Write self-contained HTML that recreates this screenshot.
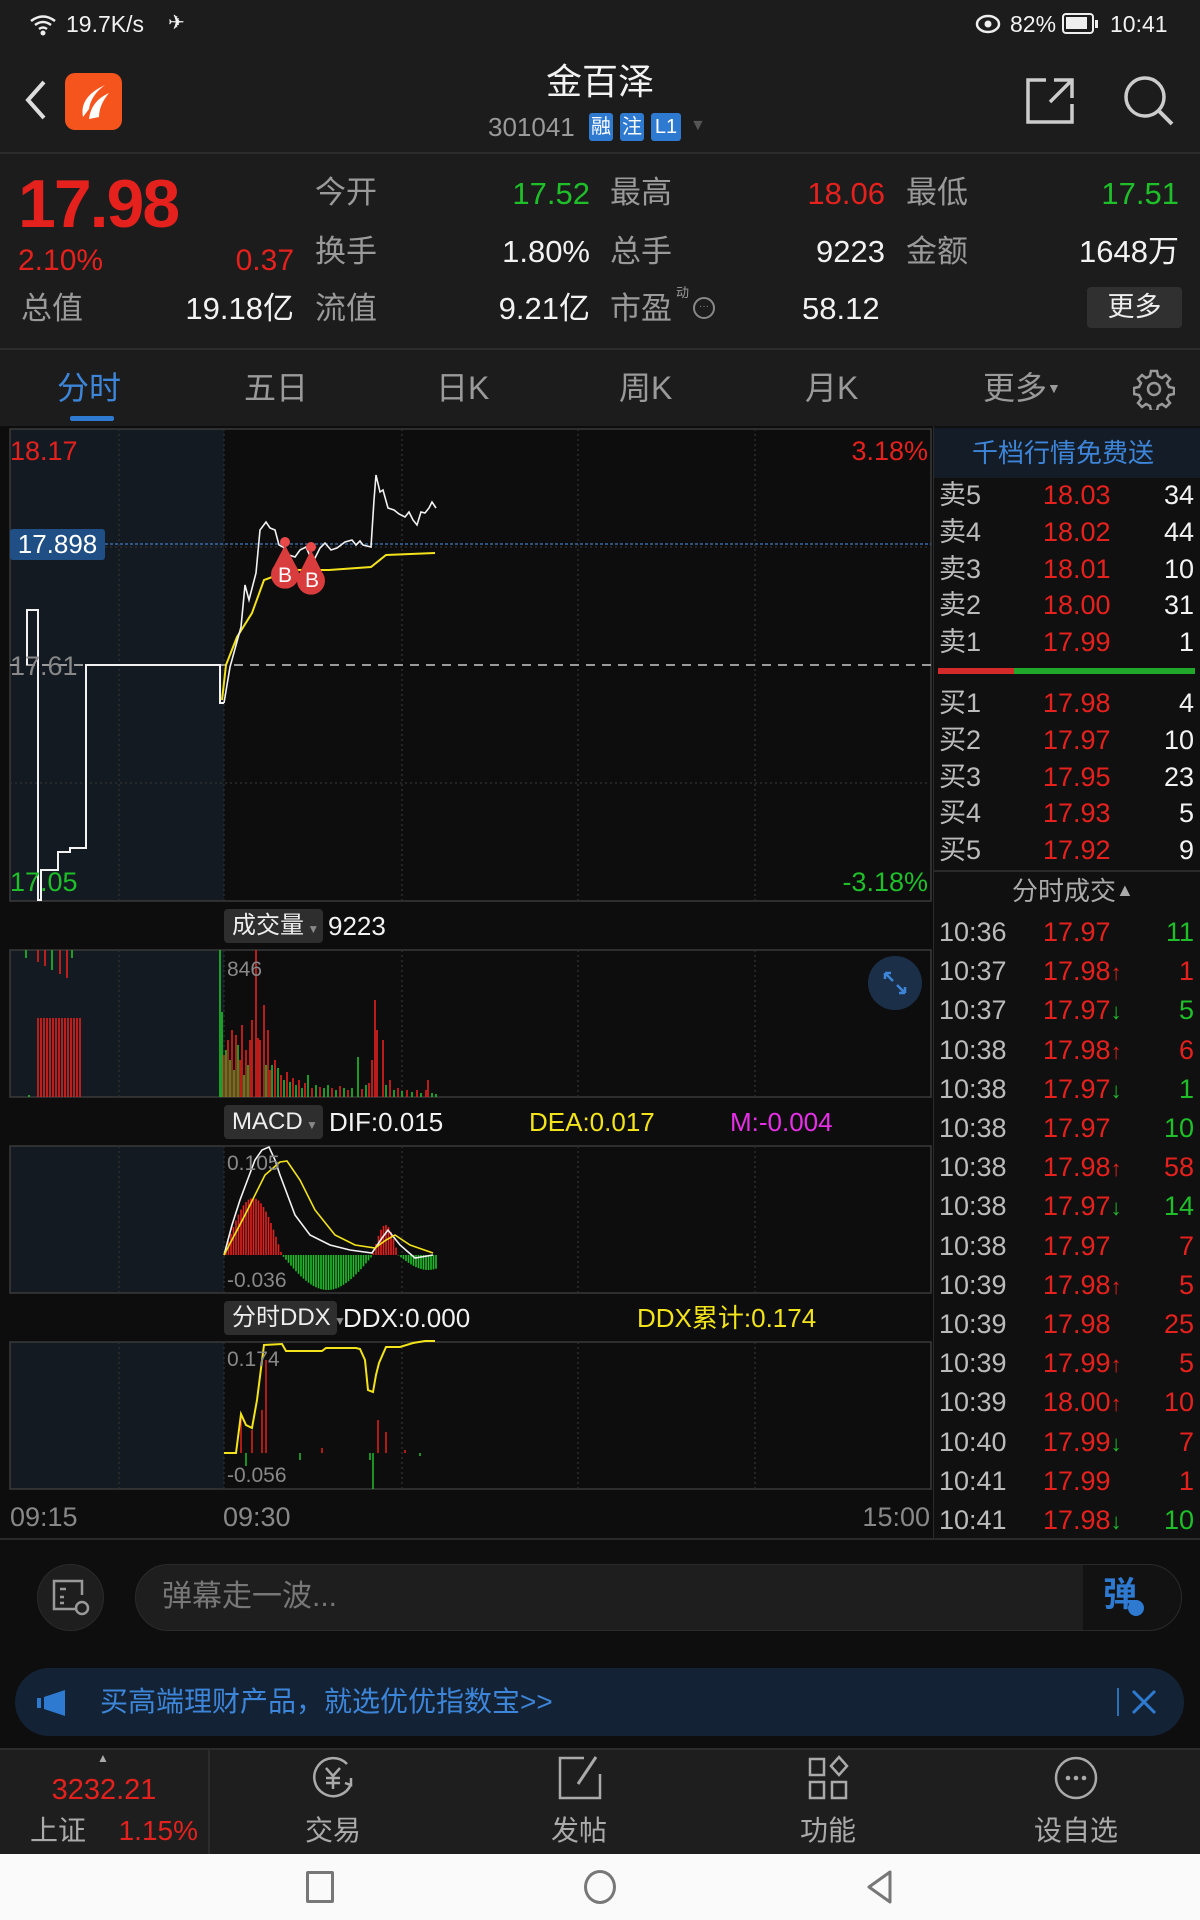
<!DOCTYPE html>
<html><head><meta charset="utf-8"><style>
*{margin:0;padding:0;box-sizing:border-box}
body{width:1200px;height:1920px;background:#0e0e0e;position:relative;overflow:hidden;font-family:"Liberation Sans","Noto Sans CJK SC",sans-serif;color:#ddd}
.a{position:absolute;white-space:nowrap;line-height:1}
.r{text-align:right}
.g{color:#9a9a9a}.red{color:#e5211d}.grn{color:#1fbf2a}.wh{color:#f2f2f2}.yel{color:#f2e31b}
</style></head><body>
<!-- top header bg -->
<div class="a" style="left:0;top:0;width:1200px;height:349px;background:#1c1c1c"></div>
<div class="a" style="left:0;top:152px;width:1200px;height:2px;background:#2c2c2c"></div>
<div class="a" style="left:0;top:348px;width:1200px;height:426px;height:78px;background:#1c1c1c;border-top:2px solid #2c2c2c"></div>
<!-- status bar -->
<svg class="a" style="left:28px;top:12px" width="30" height="26" viewBox="0 0 30 26"><path d="M3 9 Q15 0 27 9 M7 13 Q15 7 23 13 M11 17 Q15 14 19 17" stroke="#eee" stroke-width="2.5" fill="none"/><circle cx="15" cy="21" r="2.5" fill="#eee"/></svg>
<div class="a wh" style="left:66px;top:13px;font-size:23px">19.7K/s</div>
<div class="a wh" style="left:168px;top:13px;font-size:20px">✈</div>
<svg class="a" style="left:975px;top:12px" width="26" height="24"><ellipse cx="13" cy="12" rx="11" ry="8" stroke="#eee" stroke-width="2.5" fill="none"/><circle cx="13" cy="12" r="3.5" fill="#eee"/></svg>
<div class="a wh" style="left:1010px;top:13px;font-size:23px">82%</div>
<div class="a" style="left:1062px;top:13px;width:32px;height:21px;border:2.5px solid #eee;border-radius:4px"><div style="margin:2px;width:21px;height:12px;background:#eee"></div></div>
<div class="a" style="left:1095px;top:20px;width:3px;height:8px;background:#eee"></div>
<div class="a wh" style="left:1110px;top:13px;font-size:23px">10:41</div>
<!-- nav header -->
<svg class="a" style="left:22px;top:78px" width="28" height="44"><path d="M22 4 L6 22 L22 40" stroke="#ddd" stroke-width="4" fill="none"/></svg>
<div class="a" style="left:65px;top:73px;width:57px;height:57px;background:#f5541d;border-radius:10px"></div>
<svg class="a" style="left:65px;top:73px" width="57" height="57"><path d="M18 44 Q14 24 40 12 Q26 22 24 36 Z M24 46 Q26 28 44 20 Q34 32 34 44 Z" fill="#fff"/></svg>
<div class="a wh" style="left:0;width:1200px;top:64px;font-size:36px;text-align:center">金百泽</div>
<div class="a" style="left:488px;top:114px;font-size:26px;color:#9a9a9a">301041</div>
<div class="a" style="left:589px;top:113px;width:24px;height:28px;background:#2f7ad1;border-radius:3px;color:#fff;font-size:20px;text-align:center;line-height:28px">融</div>
<div class="a" style="left:620px;top:113px;width:24px;height:28px;background:#2f7ad1;border-radius:3px;color:#fff;font-size:20px;text-align:center;line-height:28px">注</div>
<div class="a" style="left:651px;top:113px;width:30px;height:28px;background:#2f7ad1;border-radius:3px;color:#fff;font-size:20px;text-align:center;line-height:28px">L1</div>
<div class="a" style="left:690px;top:118px;font-size:16px;color:#555">▼</div>
<svg class="a" style="left:1024px;top:76px" width="52" height="50"><path d="M22 4 H4 V46 H48 V28 M30 4 H48 V22 M48 4 L26 26" stroke="#ccc" stroke-width="3.5" fill="none"/></svg>
<svg class="a" style="left:1122px;top:74px" width="54" height="54"><circle cx="23" cy="23" r="19" stroke="#ccc" stroke-width="3.5" fill="none"/><path d="M37 37 L50 50" stroke="#ccc" stroke-width="4"/></svg>
<!-- quote -->
<div class="a red" style="left:18px;top:170px;font-size:68px;letter-spacing:-2px;font-weight:bold">17.98</div>
<div class="a red" style="left:18px;top:246px;font-size:30px">2.10%</div>
<div class="a red r" style="left:200px;width:94px;top:246px;font-size:30px">0.37</div>
<div class="a g" style="left:21px;top:293px;font-size:31px">总值</div>
<div class="a wh r" style="left:150px;width:144px;top:293px;font-size:31px">19.18亿</div>
<div class="a g" style="left:315px;top:177px;font-size:31px">今开</div>
<div class="a grn r" style="left:450px;width:140px;top:178px;font-size:31px">17.52</div>
<div class="a g" style="left:610px;top:177px;font-size:31px">最高</div>
<div class="a red r" style="left:745px;width:140px;top:178px;font-size:31px">18.06</div>
<div class="a g" style="left:906px;top:177px;font-size:31px">最低</div>
<div class="a grn r" style="left:1040px;width:139px;top:178px;font-size:31px">17.51</div>
<div class="a g" style="left:315px;top:236px;font-size:31px">换手</div>
<div class="a wh r" style="left:450px;width:140px;top:236px;font-size:31px">1.80%</div>
<div class="a g" style="left:610px;top:236px;font-size:31px">总手</div>
<div class="a wh r" style="left:745px;width:140px;top:236px;font-size:31px">9223</div>
<div class="a g" style="left:906px;top:236px;font-size:31px">金额</div>
<div class="a wh r" style="left:1030px;width:149px;top:236px;font-size:31px">1648万</div>
<div class="a g" style="left:315px;top:293px;font-size:31px">流值</div>
<div class="a wh r" style="left:450px;width:140px;top:293px;font-size:31px">9.21亿</div>
<div class="a g" style="left:610px;top:293px;font-size:31px">市盈</div>
<div class="a g" style="left:676px;top:286px;font-size:13px">动</div>
<div class="a" style="left:693px;top:297px;width:22px;height:22px;border:2px solid #888;border-radius:50%;font-size:10px;color:#888;text-align:center;line-height:16px">···</div>
<div class="a wh" style="left:802px;top:293px;font-size:31px">58.12</div>
<div class="a" style="left:1087px;top:287px;width:95px;height:41px;background:#303030;border-radius:4px;color:#eee;font-size:27px;text-align:center;line-height:41px">更多</div>
<!-- tabs -->
<div class="a" style="left:57px;top:372px;font-size:32px;color:#3d85d8">分时</div>
<div class="a" style="left:70px;top:416px;width:44px;height:5px;background:#2f7ad1;border-radius:2px"></div>
<div class="a g" style="left:244px;top:372px;font-size:32px">五日</div>
<div class="a g" style="left:436px;top:372px;font-size:32px">日K</div>
<div class="a g" style="left:619px;top:372px;font-size:32px">周K</div>
<div class="a g" style="left:805px;top:372px;font-size:32px">月K</div>
<div class="a g" style="left:983px;top:372px;font-size:32px">更多<span style="font-size:14px;vertical-align:6px">▼</span></div>
<svg class="a" style="left:1133px;top:368px" width="42" height="42" viewBox="0 0 42 42"><path d="M18 3h6l1 5 4 2 4-3 4 4-3 4 2 4 5 1v6l-5 1-2 4 3 4-4 4-4-3-4 2-1 5h-6l-1-5-4-2-4 3-4-4 3-4-2-4-5-1v-6l5-1 2-4-3-4 4-4 4 3 4-2z" stroke="#999" stroke-width="2.5" fill="none"/><circle cx="21" cy="21" r="6" stroke="#999" stroke-width="2.5" fill="none"/></svg>

<!-- chart SVG -->
<svg class="a" style="left:0;top:426px" width="1200" height="1114" viewBox="0 426 1200 1114" id="ch">
<rect x="0" y="426" width="933" height="1114" fill="#0d0d0d"/>
<rect x="10" y="429" width="214" height="472" fill="#131a22"/>
<rect x="10" y="950" width="214" height="147" fill="#131a22"/>
<rect x="10" y="1146" width="214" height="147" fill="#131a22"/>
<rect x="10" y="1342" width="214" height="147" fill="#131a22"/>
<g stroke="#3a3a3a" stroke-width="1.5" fill="none">
<rect x="10" y="429" width="921" height="472"/>
<rect x="10" y="950" width="921" height="147"/>
<rect x="10" y="1146" width="921" height="147"/>
<rect x="10" y="1342" width="921" height="147"/>
</g>
<g stroke="#2c2c2c" stroke-width="1.5" stroke-dasharray="2 3">
<path d="M119 429V901M224 429V901M402 429V901M578 429V901M755 429V901M10 547H931M10 783H931"/>
<path d="M119 950V1097M224 950V1097M402 950V1097M578 950V1097M755 950V1097"/>
<path d="M119 1146V1293M224 1146V1293M402 1146V1293M578 1146V1293M755 1146V1293"/>
<path d="M119 1342V1489M224 1342V1489M402 1342V1489M578 1342V1489M755 1342V1489"/>
</g>
<path d="M10 544H931" stroke="#3a6aa6" stroke-width="1.5" stroke-dasharray="3 2"/>
<path d="M10 665H931" stroke="#9a9a9a" stroke-width="2" stroke-dasharray="9 7"/>
<!-- premarket line -->
<polyline fill="none" stroke="#f2f2f2" stroke-width="2" points="27,665 27,610 38,610 38,900 41,900 41,870 58,870 58,852 70,852 70,848 86,848 86,665 220,665 220,703 224,703"/>
<!-- avg line -->
<polyline fill="none" stroke="#f2e31b" stroke-width="2" points="222,700 226,665 237,637 252,613 264,580 291,570 329,570 371,567 386,555 435,553"/>
<!-- price line -->
<polyline fill="none" stroke="#f2f2f2" stroke-width="1.6" points="224,703 230,667 241,627 245,585 249,600 256,573 260,530 266,522 270,528 275,530 279,545 283,547 289,555 295,557 300,550 306,547 310,556 314,560 320,548 325,543 331,550 337,548 345,542 352,540 356,545 360,541 363,545 367,546 371,547 374,500 376,475 380,492 383,490 388,508 394,510 399,514 405,517 409,512 413,520 417,525 421,512 425,513 429,508 432,502 436,508"/>
<circle cx="285" cy="542" r="5" fill="#e84a4a"/><circle cx="311" cy="547" r="5" fill="#e84a4a"/>
<path d="M285 545 L274 566 A14 14 0 1 0 296 566 Z" fill="#d93c3c"/>
<path d="M311 550 L300 572 A14 14 0 1 0 322 572 Z" fill="#d93c3c"/>
<text x="285" y="582" fill="#fff" font-size="21" text-anchor="middle" font-family="Liberation Sans">B</text>
<text x="312" y="587" fill="#fff" font-size="21" text-anchor="middle" font-family="Liberation Sans">B</text>
<g id="vol"></g><g id="macd"></g>
<polyline fill="none" stroke="#f2f2f2" stroke-width="1.6" points="224,1255 232,1225 240,1200 255,1160 262,1150 269,1147 275,1160 280,1175 295,1215 310,1235 330,1245 350,1250 372,1253 382,1238 388,1230 400,1245 415,1258 433,1255"/>
<polyline fill="none" stroke="#f2e31b" stroke-width="1.6" points="224,1255 245,1215 265,1175 280,1162 287,1161 300,1180 315,1210 335,1235 355,1245 375,1248 386,1240 395,1235 410,1245 433,1253"/>
<!-- ddx -->
<g stroke="#e5211d" stroke-width="1.5"><path d="M241 1453V1414M252 1453V1430M262 1453V1410M266 1453V1360M378 1453V1420M386 1453V1432M322 1453V1448M405 1453V1450"/></g>
<g stroke="#1fbf2a" stroke-width="1.5"><path d="M246 1453V1466M300 1453V1460M373 1453V1489M370 1453V1460M420 1453V1456"/></g>
<polyline fill="none" stroke="#f2e31b" stroke-width="2" points="224,1453 236,1453 241,1414 246,1425 252,1428 257,1400 264,1345 282,1344 286,1351 322,1351 326,1348 356,1348 360,1349 365,1360 368,1390 373,1392 376,1375 379,1363 386,1347 400,1347 413,1343 425,1341 435,1341"/>
<text x="227" y="976" fill="#888" font-size="21" font-family="Liberation Sans">846</text>
<text x="227" y="1170" fill="#888" font-size="21" font-family="Liberation Sans">0.105</text>
<text x="227" y="1287" fill="#888" font-size="21" font-family="Liberation Sans">-0.036</text>
<text x="227" y="1366" fill="#888" font-size="21" font-family="Liberation Sans">0.174</text>
<text x="227" y="1482" fill="#888" font-size="21" font-family="Liberation Sans">-0.056</text>
<circle cx="895" cy="983" r="27" fill="#1b3048"/>
<path d="M885 973 L893 981 M885 973 h6 M885 973 v6 M905 993 L897 985 M905 993 h-6 M905 993 v-6" stroke="#3d85d8" stroke-width="2.5" fill="none"/>
</svg>
<!-- chart labels -->
<div class="a red" style="left:10px;top:438px;font-size:27px">18.17</div>
<div class="a red r" style="left:800px;width:128px;top:438px;font-size:27px">3.18%</div>
<div class="a" style="left:10px;top:529px;width:95px;height:31px;background:#1f4f84;border-radius:3px;color:#fff;font-size:26px;text-align:center;line-height:31px">17.898</div>
<div class="a" style="left:10px;top:653px;font-size:27px;color:#888">17.61</div>
<div class="a grn" style="left:10px;top:869px;font-size:27px">17.05</div>
<div class="a grn r" style="left:800px;width:128px;top:869px;font-size:27px">-3.18%</div>
<div class="a" style="left:224px;top:909px;width:99px;height:34px;background:#2e2e2e;border-radius:4px;color:#eee;font-size:24px;line-height:34px;padding-left:8px">成交量<span style="font-size:12px;color:#888"> ▼</span></div>
<div class="a wh" style="left:328px;top:913px;font-size:26px">9223</div>
<div class="a" style="left:224px;top:1105px;width:99px;height:34px;background:#2e2e2e;border-radius:4px;color:#eee;font-size:24px;line-height:34px;padding-left:8px">MACD<span style="font-size:12px;color:#888"> ▼</span></div>
<div class="a wh" style="left:329px;top:1109px;font-size:26px">DIF:0.015</div>
<div class="a yel" style="left:529px;top:1109px;font-size:26px">DEA:0.017</div>
<div class="a" style="left:730px;top:1109px;font-size:26px;color:#e62fe6">M:-0.004</div>
<div class="a" style="left:224px;top:1301px;width:113px;height:34px;background:#2e2e2e;border-radius:4px;color:#eee;font-size:24px;line-height:34px;padding-left:8px">分时DDX<span style="font-size:12px;color:#888"> ▼</span></div>
<div class="a wh" style="left:343px;top:1305px;font-size:26px">DDX:0.000</div>
<div class="a yel" style="left:637px;top:1305px;font-size:26px">DDX累计:0.174</div>
<div class="a" style="left:10px;top:1504px;font-size:27px;color:#888">09:15</div>
<div class="a" style="left:223px;top:1504px;font-size:27px;color:#888">09:30</div>
<div class="a r" style="left:820px;width:110px;top:1504px;font-size:27px;color:#888">15:00</div>
<!-- right panel -->
<div class="a" style="left:933px;top:426px;width:267px;height:1112px;background:#101010;border-left:1.5px solid #2a2a2a"></div>
<div class="a" style="left:934px;top:428px;width:266px;height:50px;background:#141d27"></div>
<div class="a" style="left:972px;top:440px;font-size:26px;color:#3d85d8">千档行情免费送</div>
<div class="a" style="left:938px;top:668px;width:76px;height:6px;background:#d42a2a"></div>
<div class="a" style="left:1014px;top:668px;width:181px;height:6px;background:#1fa82a"></div>
<div class="a" style="left:934px;top:870px;width:266px;height:1.5px;background:#2a2a2a"></div>
<div class="a" style="left:1012px;top:878px;font-size:26px;color:#aaa">分时成交<span style="font-size:18px;vertical-align:4px">▲</span></div>
<div id="rp"></div>
<div class="a" style="left:0;top:1538px;width:1200px;height:2px;background:#2a2a2a"></div>
<!-- input -->
<div class="a" style="left:37px;top:1564px;width:67px;height:67px;border-radius:50%;background:#1e1e1e;border:1.5px solid #2a2a2a"></div>
<svg class="a" style="left:50px;top:1577px" width="42" height="42"><path d="M25 32 H4 V4 H32 V18 M10 12 h6 M10 20 h4 M10 26 h4" stroke="#999" stroke-width="2.5" fill="none"/><circle cx="32" cy="31" r="6" stroke="#999" stroke-width="2.5" fill="none"/></svg>
<div class="a" style="left:135px;top:1564px;width:1047px;height:67px;border-radius:34px;background:#1e1e1e;border:1.5px solid #2a2a2a;overflow:hidden"><div style="position:absolute;right:0;top:0;width:98px;height:67px;background:#121212"></div></div>
<div class="a" style="left:162px;top:1582px;font-size:30px;color:#777">弹幕走一波...</div>
<div class="a" style="left:1103px;top:1578px;font-size:34px;color:#2f7ad1;font-weight:bold">弹</div>
<div class="a" style="left:1128px;top:1600px;width:16px;height:16px;border-radius:50%;background:#2f7ad1"></div>
<!-- banner -->
<div class="a" style="left:15px;top:1668px;width:1169px;height:68px;border-radius:34px;background:#132234"></div>
<svg class="a" style="left:35px;top:1688px" width="40" height="30"><path d="M2 10 H6 V20 H2 Z M9 9 L30 2 V28 L9 21 Z" fill="#2f7ad1"/></svg>
<div class="a" style="left:100px;top:1688px;font-size:28px;color:#3d85d8">买高端理财产品，就选优优指数宝&gt;&gt;</div>
<div class="a" style="left:1117px;top:1688px;width:2px;height:28px;background:#2f6fb8"></div>
<svg class="a" style="left:1130px;top:1688px" width="28" height="28"><path d="M3 3 L25 25 M25 3 L3 25" stroke="#2f7ad1" stroke-width="3"/></svg>
<!-- bottom nav -->
<div class="a" style="left:0;top:1748px;width:1200px;height:106px;background:#1e1e1e;border-top:2px solid #2c2c2c"></div>
<div class="a" style="left:208px;top:1750px;width:1.5px;height:104px;background:#2c2c2c"></div>
<div class="a" style="left:97px;top:1752px;font-size:12px;color:#aaa">▲</div>
<div class="a red" style="left:0;width:208px;text-align:center;top:1776px;font-size:29px">3232.21</div>
<div class="a" style="left:30px;top:1817px;font-size:28px;color:#aaa">上证</div>
<div class="a red r" style="left:110px;width:88px;top:1817px;font-size:28px">1.15%</div>
<svg class="a" style="left:309px;top:1754px" width="48" height="48"><path d="M38 10 A19 19 0 1 0 42 30" stroke="#aaa" stroke-width="2.5" fill="none"/><path d="M42 24 L42 31 L36 29" stroke="#aaa" stroke-width="2.5" fill="none"/><path d="M17 14 L24 22 L31 14 M24 22 V35 M17 24 H31 M17 29 H31" stroke="#aaa" stroke-width="2.5" fill="none"/></svg>
<svg class="a" style="left:556px;top:1754px" width="48" height="48"><path d="M28 4 H4 V44 H44 V20" stroke="#aaa" stroke-width="2.5" fill="none"/><path d="M40 3 L22 30" stroke="#aaa" stroke-width="3"/></svg>
<svg class="a" style="left:805px;top:1754px" width="48" height="48"><rect x="5" y="5" width="14" height="16" stroke="#aaa" stroke-width="2.5" fill="none"/><rect x="5" y="28" width="14" height="16" stroke="#aaa" stroke-width="2.5" fill="none"/><rect x="27" y="28" width="14" height="16" stroke="#aaa" stroke-width="2.5" fill="none"/><path d="M34 3 L42 12 L34 21 L26 12 Z" stroke="#aaa" stroke-width="2.5" fill="none"/></svg>
<svg class="a" style="left:1052px;top:1754px" width="48" height="48"><circle cx="24" cy="24" r="20" stroke="#aaa" stroke-width="2.5" fill="none"/><circle cx="16" cy="24" r="2.3" fill="#aaa"/><circle cx="24" cy="24" r="2.3" fill="#aaa"/><circle cx="32" cy="24" r="2.3" fill="#aaa"/></svg>
<div class="a" style="left:283px;width:100px;text-align:center;top:1817px;font-size:28px;color:#aaa">交易</div>
<div class="a" style="left:529px;width:100px;text-align:center;top:1817px;font-size:28px;color:#aaa">发帖</div>
<div class="a" style="left:778px;width:100px;text-align:center;top:1817px;font-size:28px;color:#aaa">功能</div>
<div class="a" style="left:1016px;width:120px;text-align:center;top:1817px;font-size:28px;color:#aaa">设自选</div>
<!-- system nav -->
<div class="a" style="left:0;top:1854px;width:1200px;height:66px;background:#fafafa"></div>
<div class="a" style="left:306px;top:1871px;width:28px;height:32px;border:3px solid #777;border-radius:2px"></div>
<div class="a" style="left:584px;top:1870px;width:32px;height:34px;border:3px solid #777;border-radius:50%"></div>
<svg class="a" style="left:864px;top:1869px" width="30" height="36"><path d="M26 3 L5 18 L26 33 Z" stroke="#777" stroke-width="3" fill="none" stroke-linejoin="round"/></svg>
<script>
var NS="http://www.w3.org/2000/svg";
function ln(g,x,y1,y2,c){var p=document.createElementNS(NS,"path");p.setAttribute("d","M"+x+" "+y1+"V"+y2);p.setAttribute("stroke",c);p.setAttribute("stroke-width","1.6");g.appendChild(p);}
var R="#e5211d",G="#1fbf2a";
var vol=document.getElementById("vol");
for(var x=38;x<=82;x+=3)ln(vol,x,1018,1097,R);
[26,38,45,52,60,67,72].forEach(function(x,i){ln(vol,x,950,958+i*4%24,i%3?R:G)});
ln(vol,29,1095,1097,G);
var v=[[220,"g",950],[222,"g",1012],[224,"r",1055],[226,"g",1050],[228,"r",1040],[230,"g",1060],[232,"r",1030],[234,"g",1070],[236,"r",1035],[238,"g",1045],[240,"r",1060],[242,"r",1025],[244,"g",1075],[246,"r",1050],[248,"g",1065],[250,"r",1040],[252,"r",1020],[256,"r",950],[258,"r",1038],[260,"r",1040],[264,"r",1005],[266,"g",1065],[268,"r",1030],[270,"r",1070],[272,"g",1065],[275,"r",1060],[278,"g",1068],[281,"r",1075],[284,"g",1080],[287,"r",1072],[290,"g",1082],[293,"r",1078],[296,"g",1085],[299,"r",1080],[302,"g",1088],[305,"r",1083],[308,"g",1075],[312,"r",1088],[316,"g",1085],[320,"r",1087],[324,"g",1088],[328,"g",1085],[332,"r",1088],[336,"g",1090],[340,"r",1086],[344,"g",1088],[348,"r",1090],[352,"g",1088],[358,"g",1057],[362,"r",1089],[366,"g",1085],[369,"r",1083],[372,"r",1060],[375,"r",1000],[377,"r",1030],[383,"r",1040],[386,"g",1085],[390,"r",1080],[394,"g",1090],[398,"r",1088],[402,"g",1091],[407,"r",1090],[412,"g",1092],[417,"r",1090],[421,"g",1093],[426,"r",1090],[428,"r",1080],[432,"g",1093],[436,"g",1094]];
v.forEach(function(b){ln(vol,b[0],b[2],1097,b[1]=="r"?R:G)});
var m=document.getElementById("macd"),z=1255;
for(var x=226;x<=436;x+=2.5){var h;
 if(x<282){h=-57*Math.sin(Math.PI*(x-224)/58)}
 else if(x<373){h=35*Math.sin(Math.PI*(x-282)/91)}
 else if(x<398){h=-30*Math.sin(Math.PI*(x-373)/25)}
 else {h=15*Math.sin(Math.PI*(x-398)/60)}
 ln(m,x,z,z+h,h<0?R:G);}
var rp=document.getElementById("rp"),s="";
function row(y,a,b,bc,c,cc,arr,ac){s+='<div class="a" style="left:939px;top:'+y+'px;font-size:27px;color:#bbb">'+a+'</div><div class="a" style="left:1043px;top:'+y+'px;font-size:27px;color:'+bc+'">'+b+(arr?'<span style="color:'+ac+';font-size:22px">'+arr+'</span>':'')+'</div><div class="a r" style="left:1120px;width:74px;top:'+y+'px;font-size:27px;color:'+cc+'">'+c+'</div>';}
var ob=[["卖5","18.03","34"],["卖4","18.02","44"],["卖3","18.01","10"],["卖2","18.00","31"],["卖1","17.99","1"]];
ob.forEach(function(o,i){row(482+i*36.8,o[0],o[1],R,o[2],"#f2f2f2")});
var ob2=[["买1","17.98","4"],["买2","17.97","10"],["买3","17.95","23"],["买4","17.93","5"],["买5","17.92","9"]];
ob2.forEach(function(o,i){row(690+i*36.8,o[0],o[1],R,o[2],"#f2f2f2")});
var t=[["10:36","17.97","","11",G],["10:37","17.98","↑","1",R],["10:37","17.97","↓","5",G],["10:38","17.98","↑","6",R],["10:38","17.97","↓","1",G],["10:38","17.97","","10",G],["10:38","17.98","↑","58",R],["10:38","17.97","↓","14",G],["10:38","17.97","","7",R],["10:39","17.98","↑","5",R],["10:39","17.98","","25",R],["10:39","17.99","↑","5",R],["10:39","18.00","↑","10",R],["10:40","17.99","↓","7",R],["10:41","17.99","","1",R],["10:41","17.98","↓","10",G]];
t.forEach(function(o,i){row(919+i*39.2,o[0],o[1],R,o[3],o[4],o[2],o[2]=="↑"?R:G)});
rp.innerHTML=s;
</script>
</body></html>
